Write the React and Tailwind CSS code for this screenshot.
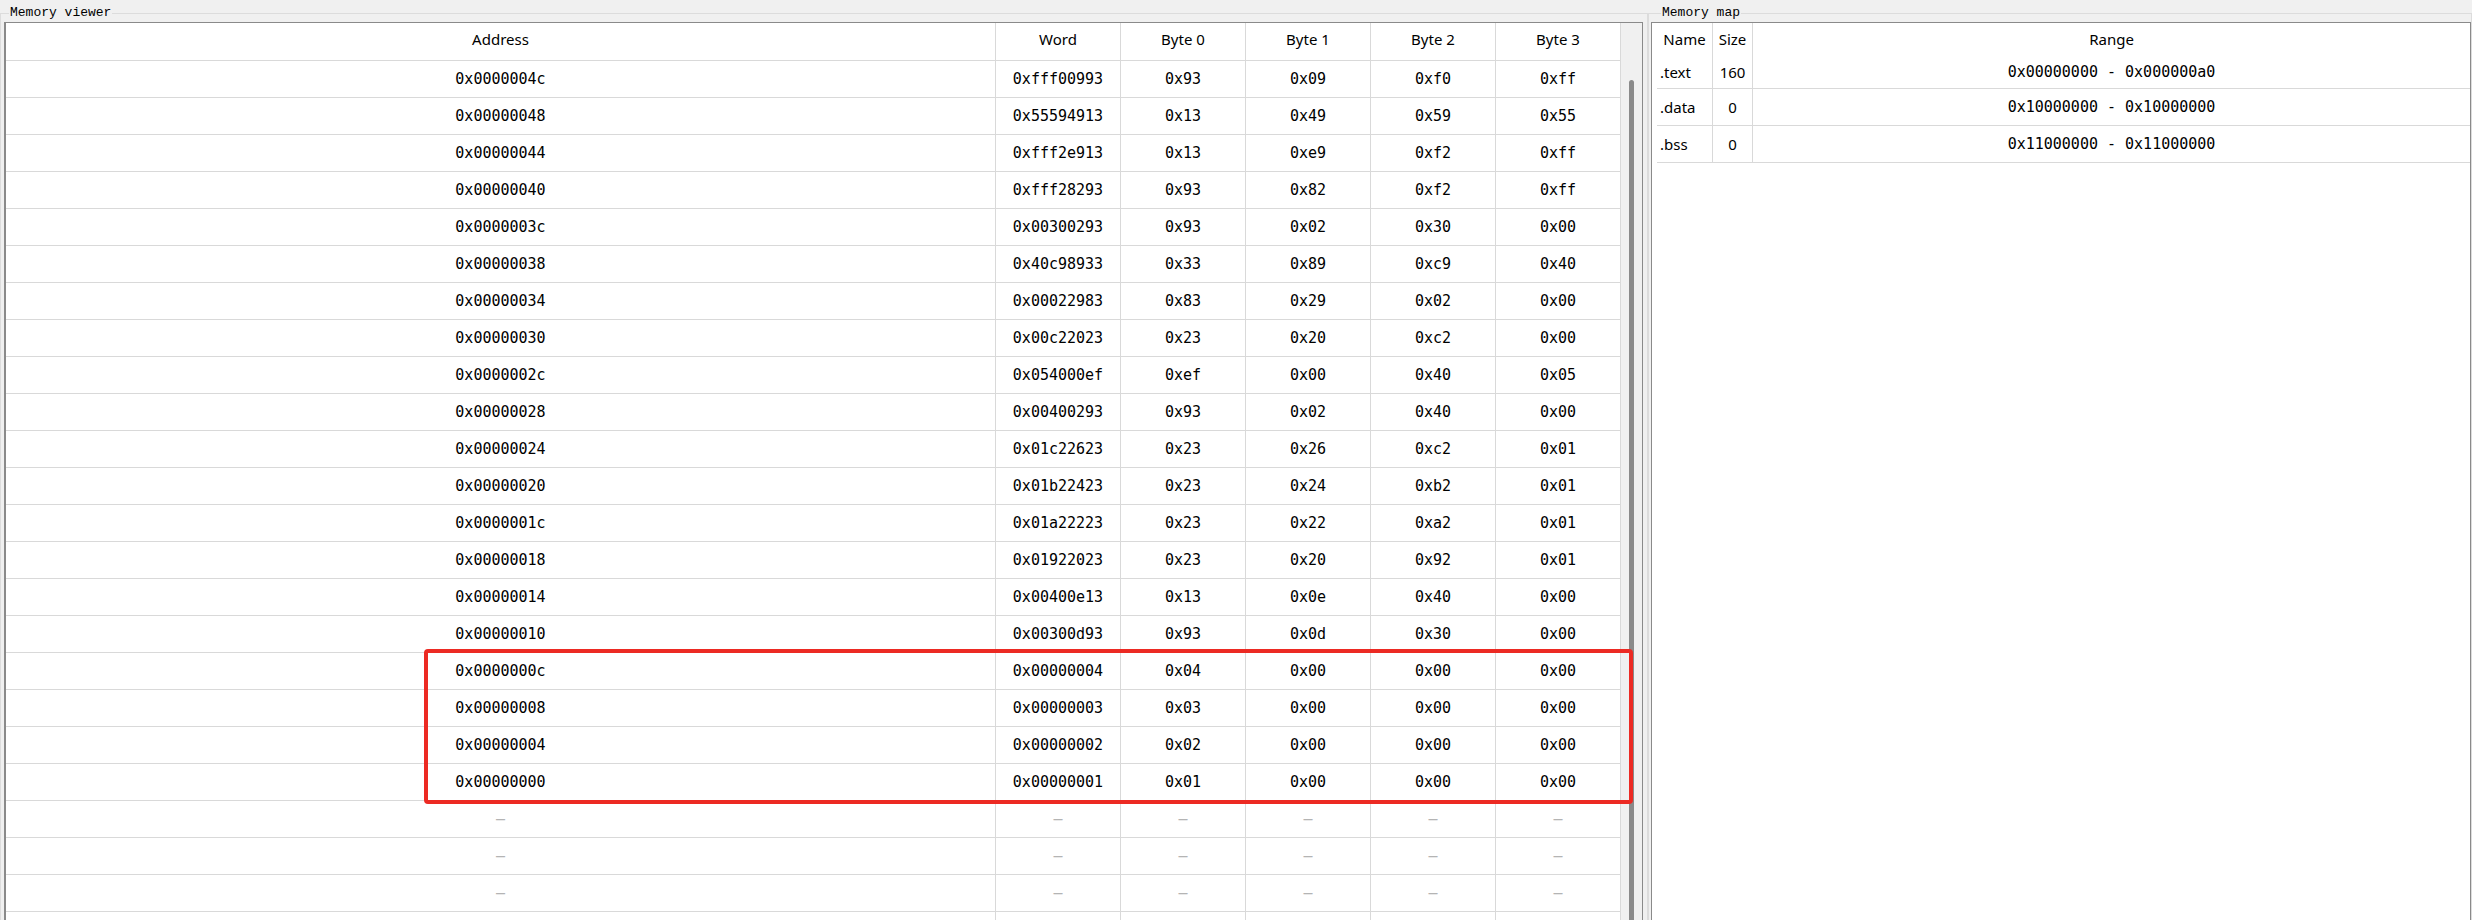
import React from "react";

const sans = "font-['Noto_Sans','Open_Sans',sans-serif]";
const mono = "font-['DejaVu_Sans_Mono',monospace]";

const memory = [
  ["0000004c", "fff00993"],
  ["00000048", "55594913"],
  ["00000044", "fff2e913"],
  ["00000040", "fff28293"],
  ["0000003c", "00300293"],
  ["00000038", "40c98933"],
  ["00000034", "00022983"],
  ["00000030", "00c22023"],
  ["0000002c", "054000ef"],
  ["00000028", "00400293"],
  ["00000024", "01c22623"],
  ["00000020", "01b22423"],
  ["0000001c", "01a22223"],
  ["00000018", "01922023"],
  ["00000014", "00400e13"],
  ["00000010", "00300d93"],
  ["0000000c", "00000004"],
  ["00000008", "00000003"],
  ["00000004", "00000002"],
  ["00000000", "00000001"],
];

const sections = [
  { name: ".text", size: "160", range: "0x00000000 - 0x000000a0" },
  { name: ".data", size: "0", range: "0x10000000 - 0x10000000" },
  { name: ".bss", size: "0", range: "0x11000000 - 0x11000000" },
];

// little-endian split of a 32-bit word
function bytesOf(word) {
  const n = parseInt(word, 16);
  return [0, 1, 2, 3].map((i) => "0x" + ((n >>> (8 * i)) & 0xff).toString(16).padStart(2, "0"));
}

function GroupBox({ title, lead, bodyClass, className, children }) {
  return (
    <div className={`flex flex-col h-full pt-[6px] ${className}`}>
      <div className="flex h-[14px] shrink-0">
        <div className={`${lead} mt-[7px] border-t border-l border-[#dcdcdc]`} />
        <span className="px-[1px] text-[13px] leading-[14px] text-black font-['Liberation_Mono',monospace]">
          {title}
        </span>
        <div className="flex-1 mt-[7px] border-t border-r border-[#dcdcdc]" />
      </div>
      <div className={`flex-1 min-h-0 flex border-l border-r border-[#dcdcdc] pt-[2px] ${bodyClass}`}>
        {children}
      </div>
    </div>
  );
}

function ViewerRow({ cells, empty }) {
  return (
    <div className="grid grid-cols-[1fr_125px_125px_125px_125px_125px] h-[37px] shrink-0">
      {cells.map((c, i) => (
        <div
          key={i}
          className={`flex items-center justify-center border-r border-b border-[#d9d9d9] text-[15px] ${mono} ${
            empty ? "text-[#b4b4b4]" : "text-black"
          }`}
        >
          {c}
        </div>
      ))}
    </div>
  );
}

function MemoryViewer() {
  const heads = ["Address", "Word", "Byte 0", "Byte 1", "Byte 2", "Byte 3"];
  return (
    <div className="flex-1 flex border border-l-2 border-b-0 border-[#8a8a8a] bg-white overflow-hidden">
      <div className="flex-1 flex flex-col">
        {/* header */}
        <div className="grid grid-cols-[1fr_125px_125px_125px_125px_125px] h-[38px] shrink-0">
          {heads.map((h) => (
            <div
              key={h}
              className={`flex items-center justify-center pb-[4px] border-r border-b border-[#d9d9d9] text-[15px] text-black ${sans}`}
            >
              {h}
            </div>
          ))}
        </div>
        {memory.map(([addr, word]) => (
          <ViewerRow key={addr} cells={["0x" + addr, "0x" + word, ...bytesOf(word)]} />
        ))}
        {[0, 1, 2].map((i) => (
          <ViewerRow key={"e" + i} empty cells={["–", "–", "–", "–", "–", "–"]} />
        ))}
        {/* next placeholder row only shows its grid lines above the window edge */}
        <ViewerRow empty cells={["", "", "", "", "", ""]} />
      </div>
      {/* scrollbar */}
      <div className="w-[21px] shrink-0 bg-[#f0f0f0]">
        <div className="mt-[57px] ml-[8px] w-[5px] h-[1200px] rounded-full bg-[#8a8a8a]" />
      </div>
    </div>
  );
}

function MemoryMap() {
  return (
    <div className="flex-1 border border-b-0 border-[#8a8a8a] bg-white pl-[5px] overflow-hidden">
      <div className="grid grid-cols-[56px_40px_1fr] h-[33px]">
        <div className={`flex items-center justify-center border-r border-[#d9d9d9] text-[15px] text-black ${sans}`}>Name</div>
        <div className={`flex items-center justify-center border-r border-[#d9d9d9] text-[15px] text-black ${sans}`}>Size</div>
        <div className={`flex items-center justify-center text-[15px] text-black ${sans}`}>Range</div>
      </div>
      {sections.map((s, i) => (
        <div key={s.name} className={`grid grid-cols-[56px_40px_1fr] ${i === 0 ? "h-[33px]" : "h-[37px]"}`}>
          <div className={`flex items-center pl-[3px] border-r border-b border-[#d9d9d9] text-[15px] text-black ${sans}`}>
            {s.name}
          </div>
          <div className={`flex items-center justify-center border-r border-b border-[#d9d9d9] text-[15px] text-black ${sans}`}>
            {s.size}
          </div>
          <div className={`flex items-center justify-center border-b border-[#d9d9d9] text-[15px] text-black ${mono}`}>
            {s.range}
          </div>
        </div>
      ))}
    </div>
  );
}

export default function App() {
  return (
    <div className="relative w-[2472px] h-[920px] bg-[#f0f0f0] flex overflow-hidden">
      <GroupBox title="Memory viewer" lead="w-[9px]" bodyClass="pl-[3px] pr-[4px]" className="w-[1648px] shrink-0">
        <MemoryViewer />
      </GroupBox>
      <GroupBox title="Memory map" lead="w-[13px]" bodyClass="pl-[2px]" className="w-[824px] shrink-0">
        <MemoryMap />
      </GroupBox>

      {/* highlight drawn over the last four words */}
      <div className="absolute left-[424px] top-[649px] w-[1209px] h-[155px] border-4 border-[#ec2a23] rounded-[4px] pointer-events-none" />
    </div>
  );
}
